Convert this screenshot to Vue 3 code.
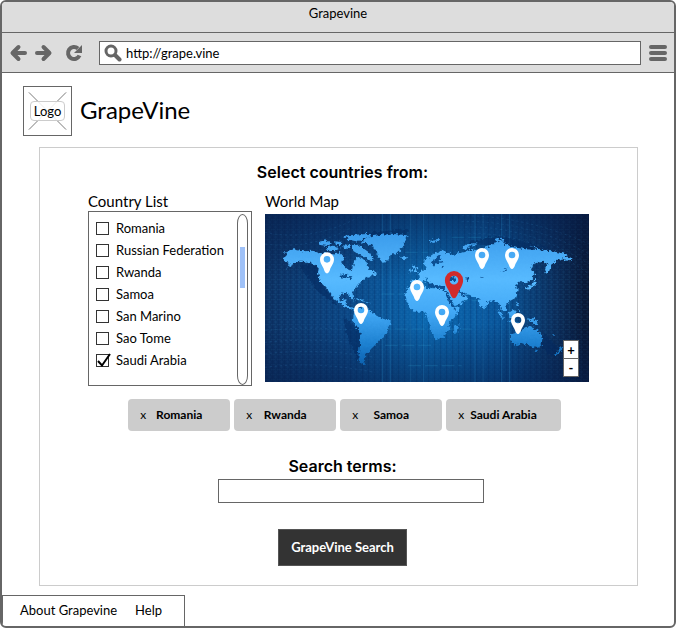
<script setup>
import { ref } from 'vue'

const address = ref('http://grape.vine')
const terms = ref('')

const countries = ref([
  { name: 'Romania', checked: false },
  { name: 'Russian Federation', checked: false },
  { name: 'Rwanda', checked: false },
  { name: 'Samoa', checked: false },
  { name: 'San Marino', checked: false },
  { name: 'Sao Tome', checked: false },
  { name: 'Saudi Arabia', checked: true },
])

const selected = ref(['Romania', 'Rwanda', 'Samoa', 'Saudi Arabia'])

function remove(name) {
  selected.value = selected.value.filter((n) => n !== name)
}

// Pin tips in map units
const pins = [
  { x: 186, y: 178 },
  { x: 288, y: 330 },
  { x: 456, y: 261 },
  { x: 651, y: 165 },
  { x: 741, y: 165 },
  { x: 759, y: 360 },
  { x: 531, y: 336 },
]
</script>

<template>
  <div class="browser">
    <div class="titlebar">Grapevine</div>

    <div class="toolbar">
      <button class="tool" type="button" aria-label="Back">
        <svg width="18" height="18" viewBox="0 0 18 18"><path d="M9.500 3 3.500 9l6 6M4 9h12" /></svg>
      </button>
      <button class="tool" type="button" aria-label="Forward">
        <svg width="18" height="18" viewBox="0 0 18 18"><path d="M8.500 3l6 6-6 6M14 9H2" /></svg>
      </button>
      <button class="tool reload" type="button" aria-label="Reload">
        <svg width="18" height="18" viewBox="0 0 18 18">
          <path d="M13 4.500A6 6 0 1 0 14.500 11.500" class="arc" />
          <path d="M17 1V9H9Z" class="solid" />
        </svg>
      </button>
      <label class="address">
        <svg width="18" height="18" viewBox="0 0 18 18">
          <circle cx="7" cy="7" r="5" />
          <path d="M11 11l4.500 4.500" class="handle" />
        </svg>
        <input v-model="address" type="text" aria-label="Address" />
      </label>
      <button class="tool" type="button" aria-label="Menu">
        <svg width="18" height="18" viewBox="0 0 18 18"><path d="M2 3h14M2 9h14M2 15h14" /></svg>
      </button>
    </div>

    <header class="brand">
      <div class="logo">
        <svg viewBox="0 0 48 48" aria-hidden="true"><path d="M5 5l38 38M43 5L5 43" /></svg>
        <span>Logo</span>
      </div>
      <h1>GrapeVine</h1>
    </header>

    <main class="panel">
      <h2>Select countries from:</h2>

      <div class="pickers">
        <section>
          <h3>Country List</h3>
          <div class="list">
            <ul>
              <li v-for="c in countries" :key="c.name">
                <label>
                  <input v-model="c.checked" type="checkbox" />
                  <svg class="tick" width="16" height="16" viewBox="0 0 16 16">
                    <path d="M2 9l4 4.500L14 2" />
                  </svg>
                  <span>{{ c.name }}</span>
                </label>
              </li>
            </ul>
            <div class="track"><div class="thumb"></div></div>
          </div>
        </section>

        <section>
          <h3>World Map</h3>
          <div class="map">
            <svg viewBox="0 0 972 504" role="img" aria-label="World map with location pins">
              <defs>
                <linearGradient id="sea" x1="0" y1="0" x2="1" y2="0">
                  <stop offset="0" stop-color="#0c3162" />
                  <stop offset=".25" stop-color="#0b4583" />
                  <stop offset=".5" stop-color="#0a66ae" />
                  <stop offset=".72" stop-color="#09559a" />
                  <stop offset=".9" stop-color="#0b2d5a" />
                  <stop offset="1" stop-color="#09152f" />
                </linearGradient>
                <linearGradient id="shade" x1="0" y1="0" x2="0" y2="1">
                  <stop offset="0" stop-color="#061c48" stop-opacity=".6" />
                  <stop offset=".4" stop-color="#061c48" stop-opacity="0" />
                  <stop offset=".65" stop-color="#061c48" stop-opacity="0" />
                  <stop offset="1" stop-color="#061c48" stop-opacity=".55" />
                </linearGradient>
                <linearGradient id="land" gradientUnits="userSpaceOnUse" x1="0" y1="60" x2="0" y2="450">
                  <stop offset="0" stop-color="#3b9cec" />
                  <stop offset=".35" stop-color="#57baff" />
                  <stop offset=".6" stop-color="#43a9f6" />
                  <stop offset=".85" stop-color="#1c80d0" />
                  <stop offset="1" stop-color="#0d62b0" />
                </linearGradient>
                <pattern id="mesh" width="18" height="15" patternUnits="userSpaceOnUse">
                  <path d="M0 2H12M9 9H18" stroke="#39a4df" stroke-width="1.500" opacity=".22" />
                  <path d="M5 0V15" stroke="#021d4b" stroke-width="3" opacity=".2" />
                  <path d="M14 0V15" stroke="#2b91d3" stroke-width="1" opacity=".2" />
                </pattern>
                <filter id="coast" x="-10%" y="-10%" width="120%" height="120%" color-interpolation-filters="sRGB">
                  <feTurbulence type="fractalNoise" baseFrequency=".12" numOctaves="2" seed="4" />
                  <feDisplacementMap in="SourceGraphic" scale="16" xChannelSelector="R" yChannelSelector="G" />
                </filter>
              </defs>

              <rect width="972" height="504" fill="url(#sea)" />
              <rect width="972" height="504" fill="url(#mesh)" />
              <rect width="972" height="504" fill="url(#shade)" />
              <path
                d="M352 0V504M376 0V504M437 0V504M475 0V504M630 0V504M654 0V504M710 0V504M734 0V504"
                stroke="#3aaee8" stroke-width="2" opacity=".3"
              />
              <path
                d="M350 240H560M340 345H620M420 115H490M430 455H590M570 260H680M360 394H510M560 70H700"
                stroke="#3fc0e9" stroke-width="2" opacity=".25" stroke-dasharray="38 12"
              />
              <g fill="none" stroke="#4192ce" stroke-width="2" stroke-dasharray="7 8" opacity=".24">
                <path d="M590 5Q780 5 972 90M590 22Q790 20 972 120M600 39Q790 35 972 150M610 58Q800 55 972 180" />
                <path d="M0 55Q140 85 280 10M0 90Q140 108 260 40M0 350Q130 335 280 350M0 385Q130 370 300 390M0 420Q150 400 330 430M0 460Q150 440 330 475" />
              </g>

              <!-- Coast shadows -->
              <g fill="#03285f" opacity=".5" filter="url(#coast)">
                <path d="M100 150L160 155 180 225 220 275 160 235 120 180ZM235 310L290 350 278 440 245 360ZM838 360L880 400 860 430 830 400Z" />
                <path d="M320 55L430 45 420 70 300 80ZM605 85L700 65 850 100 750 110Z" />
              </g>

              <g fill="url(#land)" filter="url(#coast)">
                <!-- North America -->
                <path
                  d="M57 113L85 106 113 112 145 110 163 118 185 116 210 122 224 114 238 130 230 148 248 166 260 172 266 148 272 128 290 131 303 143 315 168 338 181 312 188 297 196 285 206 275 220 262 236 266 260 256 252 252 240 235 236 223 248 224 262 236 256 246 258 242 272 258 280 274 282 274 290 258 286 236 276 220 264 207 254 196 238 180 218 165 203 159 178 161 163 145 150 125 143 100 143 80 153 63 165 77 150 60 143 53 133 65 125Z"
                />
                <path d="M160 83L185 79 200 88 188 96 165 93ZM182 101L208 94 224 103 212 112 190 110ZM207 82L232 84 226 94 210 91ZM232 66L262 63 305 60 320 66 296 73 278 83 252 78ZM235 90L258 94 251 105 236 101ZM260 94L280 92 302 108 318 119 326 135 314 141 298 129 279 120 265 111Z" />
                <path d="M226 184L246 179 247 186 262 187 258 196 246 188 239 197Z" fill="#084b8d" />
                <path d="M267 252L285 254 301 263 287 262ZM302 264L318 267 309 271ZM327 167L338 177 329 180Z" />
                <!-- Greenland and Iceland -->
                <path d="M288 86L307 68 348 62 380 59 426 64 418 78 420 90 407 108 396 118 376 124 367 140 354 148 342 133 334 111 322 94Z" />
                <path d="M404 128L421 126 430 131 416 136Z" />
                <!-- South America -->
                <path d="M268 290L280 280 305 283 330 301 345 312 377 320 375 338 360 365 343 377 331 392 318 405 307 419 298 430 296 443 304 451 288 448 280 430 285 393 287 358 275 338 263 322Z" />
                <!-- Europe and Asia -->
                <path
                  d="M438 197L460 199 465 189 458 178 475 169 485 160 476 151 480 137 495 127 510 116 528 110 542 113 565 123 580 118 605 113 619 107 640 107 670 98 695 83 715 86 740 98 780 106 820 108 860 112 895 118 925 136 905 140 890 133 875 140 860 150 852 173 842 178 840 163 850 146 830 143 805 150 798 168 810 178 800 198 780 208 765 203 752 213 758 228 750 253 730 263 720 273 726 291 711 291 702 268 690 263 675 258 658 286 645 278 640 256 625 246 600 240 608 253 590 268 570 276 555 253 542 233 538 220 510 218 500 208 488 203 482 190 474 199 468 205 440 209Z"
                />
                <path d="M443 151L455 160 458 174 444 174 451 165 441 160ZM433 165L441 164 439 173 431 173ZM473 187L482 196 486 204 478 200Z" />
                <path d="M492 77L526 75 518 84 500 87ZM593 99L604 91 627 88 640 90 609 99 599 107ZM688 75L705 71 720 82 706 86ZM796 94L824 98 810 101Z" />
                <!-- Africa -->
                <path d="M424 258L421 238 432 218 446 209 474 210 484 222 505 223 530 225 544 235 551 256 565 282 585 280 576 299 556 321 552 348 538 366 515 378 504 368 495 339 488 314 480 293 450 293 430 278Z" />
                <path d="M567 340L584 330 578 352 568 358Z" />
                <!-- South-east Asia and Oceania -->
                <path d="M692 286L705 294 720 315 710 312ZM723 319L742 323 761 326 743 330ZM731 296L747 285 755 293 747 310 733 309ZM754 259L762 277 754 275ZM761 284L767 297 759 293ZM769 314L777 321 770 326ZM785 313L805 315 826 330 809 330 797 322ZM781 222L790 215 805 210 808 192 814 209 799 224 784 228Z" />
                <path d="M738 360L765 353 780 340 798 336 808 348 818 343 832 373 830 393 815 403 795 396 775 388 745 396 738 378ZM810 407L822 408 815 417Z" />
                <path d="M885 401L895 397 887 413 871 424 867 423ZM861 356L868 364 865 365Z" />
              </g>

              <!-- Inland seas and gulfs -->
              <g fill="#0c4f93" filter="url(#coast)">
                <path d="M489 207L511 212 535 216 538 225 510 222 489 216ZM544 195L558 187 575 193 565 201 548 202ZM604 191L611 190 614 200 607 202ZM500 151L513 130 528 119 520 140 507 158ZM642 189L654 188 651 191ZM708 175L728 162 720 172Z" />
                <path d="M541 229L561 275 570 282M581 233L600 246" fill="none" stroke="#0c4f93" stroke-width="6" />
                <path d="M525 130L515 145 535 143M528 163L535 156" fill="none" stroke="#0c4f93" stroke-width="4" />
              </g>

              <g v-for="p in pins" :key="`${p.x}-${p.y}`" :transform="`translate(${p.x} ${p.y})`">
                <path
                  class="pin"
                  d="M0 0C-4 0-7-5-9-11-12-21-21-29-21-42a21 21 0 0 1 42 0C21-29 12-21 9-11 7-5 4 0 0 0ZM0-52a10 10 0 1 0 0 20 10 10 0 0 0 0-20Z"
                />
              </g>
              <g transform="translate(567 253) scale(1.300)">
                <path
                  class="pin current"
                  d="M0 0C-4 0-7-5-9-11-12-21-21-29-21-42a21 21 0 0 1 42 0C21-29 12-21 9-11 7-5 4 0 0 0ZM0-52a10 10 0 1 0 0 20 10 10 0 0 0 0-20Z"
                />
              </g>
            </svg>
            <div class="zoom">
              <button type="button" aria-label="Zoom in">+</button>
              <button type="button" aria-label="Zoom out">-</button>
            </div>
          </div>
        </section>
      </div>

      <div class="chips">
        <div v-for="name in selected" :key="name" class="chip">
          <button type="button" :aria-label="`Remove ${name}`" @click="remove(name)">x</button>
          <span>{{ name }}</span>
        </div>
      </div>

      <form class="search" @submit.prevent>
        <label for="terms">Search terms:</label>
        <div class="field"><input id="terms" v-model="terms" type="text" /></div>
        <button type="submit">GrapeVine Search</button>
      </form>
    </main>

    <footer class="footer">
      <a href="#about">About Grapevine</a>
      <a href="#help">Help</a>
    </footer>
  </div>
</template>

<style>
body {
  background: #fff;
}
</style>

<style scoped>
.browser,
.browser * {
  box-sizing: border-box;
}

.browser {
  display: flex;
  flex-direction: column;
  min-height: 100vh;
  border: 2px solid #666;
  border-radius: 6px;
  overflow: hidden;
  background: #fff;
  color: #000;
  font-family: Lato, "Open Sans", sans-serif;
  font-size: 13px;
  line-height: 22px;
}

button,
input {
  font: inherit;
  color: inherit;
}

button {
  padding: 0;
  border: 0;
  background: none;
  cursor: pointer;
}

h1,
h2,
h3,
ul {
  margin: 0;
  padding: 0;
  font-weight: 400;
}

.titlebar {
  height: 31px;
  border-bottom: 1px solid #666;
  background: #ddd;
  text-align: center;
}

.toolbar {
  display: flex;
  align-items: center;
  gap: 8px;
  height: 40px;
  padding: 0 7px;
  border-bottom: 1px solid #666;
  background: #ddd;
}

.tool {
  display: flex;
}

.reload {
  margin: 0 8px 0 4px;
}

.toolbar svg {
  flex: none;
  fill: none;
  stroke: #666;
  stroke-width: 4;
  stroke-linecap: round;
  stroke-linejoin: round;
}

.toolbar .arc {
  stroke-linecap: butt;
}

.toolbar .solid {
  fill: #666;
  stroke: none;
}

.address {
  display: flex;
  flex: 1;
  align-items: center;
  gap: 4px;
  height: 24px;
  padding: 0 4px;
  border: 1px solid #666;
  background: #fff;
}

.address svg {
  stroke-width: 3;
}

.address .handle {
  stroke-width: 4;
}

.address input {
  flex: 1;
  min-width: 0;
  padding: 0;
  border: 0;
  outline: 0;
  background: none;
}

.brand {
  display: flex;
  align-items: center;
  gap: 8px;
  padding: 13px 21px 11px;
}

.brand h1 {
  padding-bottom: 3px;
  font-size: 24px;
  line-height: 32px;
}

.logo {
  display: grid;
  place-items: center;
  width: 49px;
  height: 50px;
  border: 1px solid #666;
}

.logo > * {
  grid-area: 1 / 1;
}

.logo svg {
  width: 100%;
  height: 100%;
  stroke: #777;
}

.logo span {
  z-index: 1;
  padding: 0 3px;
  border: 1px solid #ccc;
  border-radius: 4px;
  background: rgba(255, 255, 255, 0.85);
  line-height: 18px;
}

.panel {
  margin: 0 36px 9px 37px;
  padding: 14px 48px 19px;
  border: 1px solid #ccc;
}

.panel h2,
.search label {
  font-family: Inter, Lato, sans-serif;
  font-size: 16px;
  font-weight: 600;
  line-height: 20px;
}

.panel h2 {
  padding-left: 8px;
  text-align: center;
}

.pickers {
  display: grid;
  grid-template-columns: 164fr 324fr;
  gap: 13px;
  margin-top: 10px;
}

.pickers h3 {
  padding-bottom: 1px;
  font-size: 15px;
  line-height: 18px;
}

.list {
  display: flex;
  justify-content: space-between;
  height: 175px;
  padding: 2px 3px 0 7px;
  border: 1px solid #666;
}

.list ul {
  padding-top: 3px;
  list-style: none;
}

.list label {
  display: grid;
  grid-template-columns: 13px auto;
  column-gap: 7px;
  align-items: center;
  white-space: nowrap;
}

.list input {
  grid-area: 1 / 1;
  appearance: none;
  width: 13px;
  height: 13px;
  margin: 0;
  border: 1px solid #333;
  background: #fff;
}

.tick {
  grid-area: 1 / 1;
  fill: none;
  stroke: #000;
  stroke-width: 2;
  visibility: hidden;
  pointer-events: none;
}

.list input:checked + .tick {
  visibility: visible;
}

.track {
  width: 11px;
  padding: 32px 2px 0;
  border: 1px solid #666;
  border-radius: 6px / 10px;
}

.thumb {
  height: 41px;
  background: #9fc1f8;
}

.map {
  position: relative;
  margin-top: 3px;
}

.map > svg {
  display: block;
  width: 100%;
}

.pin {
  fill: #fff;
  fill-rule: evenodd;
}

.current {
  fill: #d12b2b;
}

.zoom {
  position: absolute;
  right: 10px;
  bottom: 5px;
  display: grid;
  width: 16px;
  border: 1px solid #666;
  background: #fff;
}

.zoom button {
  height: 17px;
  font-weight: 700;
  line-height: 16px;
}

.zoom button + button {
  height: 18px;
  border-top: 1px solid #666;
}

.chips {
  display: flex;
  flex-wrap: wrap;
  justify-content: center;
  gap: 4px;
  margin-top: 13px;
  padding-left: 12px;
}

.chip {
  display: grid;
  align-items: center;
  min-width: 102px;
  height: 32px;
  padding: 0 12px;
  border-radius: 4px;
  background: #ccc;
  font-size: 12px;
}

.chip > * {
  grid-area: 1 / 1;
}

.chip button {
  justify-self: start;
}

.chip span {
  justify-self: center;
  padding: 0 12px;
  font-weight: 700;
}

.search {
  display: flex;
  flex-direction: column;
  align-items: center;
  margin-top: 25px;
  padding-left: 8px;
}

.field {
  padding-left: 16px;
  margin-top: 3px;
}

.field input {
  display: block;
  width: 266px;
  height: 24px;
  padding: 0 6px;
  border: 1px solid #666;
  background: #fff;
}

.search > button {
  height: 37px;
  margin-top: 26px;
  padding: 0 12px 2px;
  border: 1px solid #555;
  background: #333;
  color: #fff;
  font-weight: 700;
}

.footer {
  display: flex;
  gap: 18px;
  align-items: center;
  align-self: flex-start;
  height: 31px;
  padding: 0 22px 2px 17px;
  border: 1px solid #666;
  border-width: 1px 1px 0 1px;
}

.footer a {
  color: inherit;
  text-decoration: none;
}
</style>
